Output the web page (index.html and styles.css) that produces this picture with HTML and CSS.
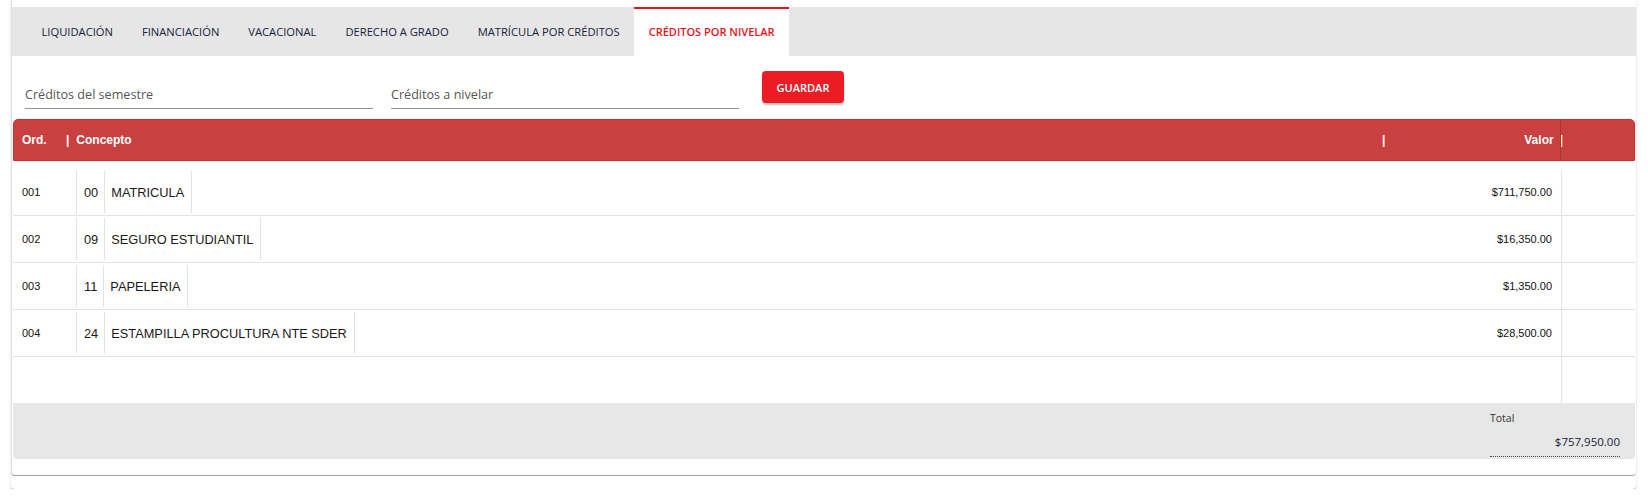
FILE: index.html
```html
<!DOCTYPE html>
<html lang="es">
<head>
    <meta charset="UTF-8">
    <title>Créditos por nivelar</title>
    <link rel="stylesheet" href="styles.css">
</head>
<body>
    <div class="card">
        <div class="tabs">
            <div class="tab">LIQUIDACIÓN</div>
            <div class="tab">FINANCIACIÓN</div>
            <div class="tab">VACACIONAL</div>
            <div class="tab">DERECHO A GRADO</div>
            <div class="tab">MATRÍCULA POR CRÉDITOS</div>
            <div class="tab active">CRÉDITOS POR NIVELAR</div>
        </div>

        <form class="form-row">
            <input type="text" class="field" placeholder="Créditos del semestre">
            <input type="text" class="field" placeholder="Créditos a nivelar">
            <button type="button" class="btn-save">GUARDAR</button>
        </form>

        <div class="grid">
            <div class="grid-head">
                <div class="h-ord">Ord.</div>
                <div class="h-concept"><span>|</span><span class="h-label">Concepto</span></div>
                <div class="h-valor"><span>|</span><span class="h-right">Valor<span class="h-pipe">|</span></span></div>
                <div class="h-extra"></div>
            </div>

            <div class="grid-body">
                <div class="row">
                    <div class="c-ord">001</div>
                    <div class="c-code">00</div>
                    <div class="c-concept">MATRICULA</div>
                    <div class="c-value">$711,750.00</div>
                    <div class="c-extra"></div>
                </div>
                <div class="row">
                    <div class="c-ord">002</div>
                    <div class="c-code">09</div>
                    <div class="c-concept">SEGURO ESTUDIANTIL</div>
                    <div class="c-value">$16,350.00</div>
                    <div class="c-extra"></div>
                </div>
                <div class="row">
                    <div class="c-ord">003</div>
                    <div class="c-code">11</div>
                    <div class="c-concept">PAPELERIA</div>
                    <div class="c-value">$1,350.00</div>
                    <div class="c-extra"></div>
                </div>
                <div class="row">
                    <div class="c-ord">004</div>
                    <div class="c-code">24</div>
                    <div class="c-concept">ESTAMPILLA PROCULTURA NTE SDER</div>
                    <div class="c-value">$28,500.00</div>
                    <div class="c-extra"></div>
                </div>
                <div class="row empty">
                    <div class="c-value"></div>
                    <div class="c-extra"></div>
                </div>
            </div>

            <div class="grid-foot">
                <div class="total">
                    <div class="total-label">Total</div>
                    <div class="total-value">$757,950.00</div>
                </div>
            </div>
        </div>
    </div>
    <div class="card-stub"></div>
</body>
</html>
```

FILE: styles.css
```css
body {
    margin: 0;
    background-color: white;
    font-family: "Open Sans", Arial, sans-serif;
}
.card {
    margin-left: 11px;
    width: 1625px;
    box-sizing: border-box;
    padding: 7px 0 16px 0;
    border-left: 1px solid #e2e2e2;
    border-radius: 0 0 4px 4px;
    background-color: white;
    box-shadow: 0 2px 1px -1px rgba(0,0,0,0.2), 0 1px 1px 0 rgba(0,0,0,0.14), 0 1px 3px 0 rgba(0,0,0,0.12);
}
.card-stub {
    margin: 1px 0 0 11px;
    width: 1625px;
    height: 13px;
    border-radius: 0 0 4px 4px;
    background-color: white;
    box-shadow: 0 2px 1px -1px rgba(0,0,0,0.2), 0 1px 1px 0 rgba(0,0,0,0.14), 0 1px 3px 0 rgba(0,0,0,0.12);
}

/* tabs */
.tabs {
    display: flex;
    height: 49px;
    padding-left: 15px;
    background-color: #e6e6e6;
}
.tab {
    display: flex;
    align-items: center;
    padding: 0 14.5px;
    font-size: 11.2px;
    color: #16223c;
}
.tab.active {
    background-color: white;
    border-top: 2px solid #e8141c;
    color: #e8141c;
    font-weight: 600;
    padding-bottom: 2px;
    font-size: 11px;
}

/* form */
.form-row {
    display: flex;
    align-items: flex-start;
    margin: 0;
    padding: 15px 0 0 13px;
}
.field {
    width: 348px;
    height: 38px;
    box-sizing: border-box;
    margin-right: 18px;
    padding: 10px 0 0 0;
    border: none;
    border-bottom: 1px solid #949494;
    font-family: "Open Sans", Arial, sans-serif;
    font-size: 12.6px;
    color: #333;
    outline: none;
}
.field::placeholder {
    color: #555;
    opacity: 1;
}
.btn-save {
    margin-left: 5px;
    width: 82px;
    height: 32px;
    border: none;
    border-radius: 4px;
    background-color: #ed1c24;
    color: white;
    font-family: "Open Sans", Arial, sans-serif;
    font-weight: 600;
    font-size: 11px;
    box-shadow: 0 2px 2px rgba(0,0,0,0.25);
    cursor: pointer;
}

/* table */
.grid {
    margin: 10px 1px 0 1px;
    font-family: "Liberation Sans", Arial, sans-serif;
}
.grid-head {
    display: flex;
    height: 42px;
    box-sizing: border-box;
    border: 1px solid #d62a2a;
    border-radius: 5px 5px 0 0;
    background-color: #c94040;
    color: white;
    font-weight: bold;
    font-size: 12px;
}
.h-ord {
    display: flex;
    align-items: center;
    width: 44px;
    padding-left: 8px;
}
.h-concept {
    flex: 1;
    display: flex;
    align-items: center;
}
.h-label {
    margin-left: 7px;
}
.h-valor {
    width: 178px;
    display: flex;
    align-items: center;
    justify-content: space-between;
}
.h-right {
    margin-right: -3px;
}
.h-pipe {
    margin-left: 6px;
}
.h-extra {
    width: 73px;
    border-left: 1px solid #a83636;
}
.grid-body {
    padding-top: 8px;
}
.row {
    display: flex;
    align-items: center;
    height: 47px;
    box-sizing: border-box;
    border-bottom: 1px solid #e3e3e3;
    color: #1a1a1a;
}
.row.empty {
    height: 46px;
    border-bottom: none;
}
.c-ord {
    width: 54px;
    padding-left: 9px;
    font-size: 11px;
    color: #111;
}
.c-code,
.c-concept {
    display: flex;
    align-items: center;
    height: 42px;
    border-right: 1px solid #e3e3e3;
    font-size: 12.8px;
}
.c-code {
    border-left: 1px solid #e3e3e3;
    padding: 0 6px 0 7px;
}
.c-concept {
    padding: 0 7px 0 6px;
}
.c-value {
    flex: 1;
    text-align: right;
    padding-right: 9px;
    font-size: 11px;
    color: #111;
}
.c-extra {
    width: 73px;
    align-self: stretch;
    border-left: 1px solid #e3e3e3;
}
.grid-foot {
    display: flex;
    justify-content: flex-end;
    height: 56px;
    box-sizing: border-box;
    padding: 8px 15px 0 0;
    border-radius: 0 0 4px 4px;
    background-color: #e7e7e7;
    font-family: "Open Sans", Arial, sans-serif;
}
.total {
    width: 130px;
}
.total-label {
    font-size: 10.5px;
    line-height: 14px;
    color: #333;
}
.total-value {
    margin-top: 9px;
    padding-bottom: 6px;
    border-bottom: 1px dotted #444;
    text-align: right;
    font-size: 11.5px;
    line-height: 16px;
    color: #16223c;
}
```
